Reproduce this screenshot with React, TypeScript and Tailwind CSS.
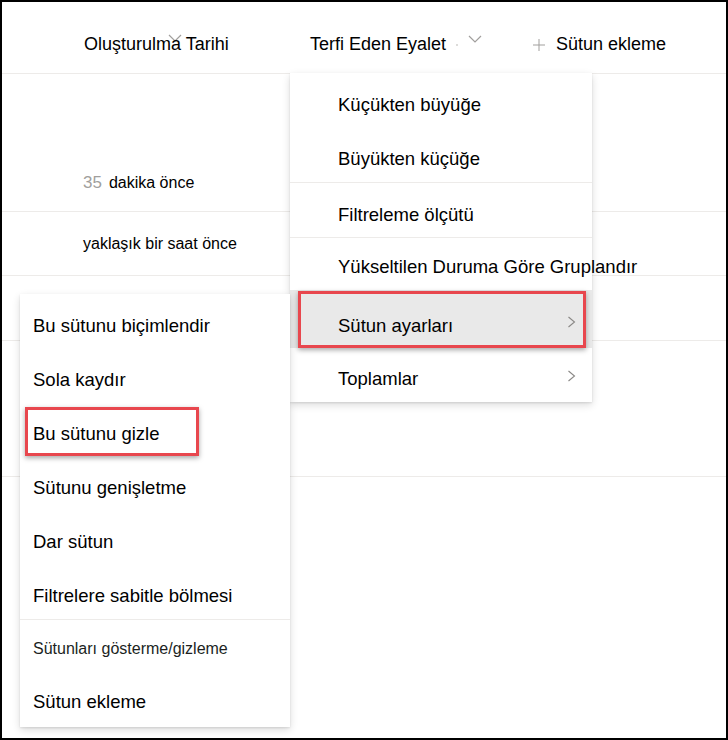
const SORT_ROWS = [
  { label: 'Küçükten büyüğe', row: 'h-[57px] pt-[20px]' },
  { label: 'Büyükten küçüğe', row: 'h-[52px] pt-[17px]' },
]

const SUB_ROWS = [
  { label: 'Bu sütunu biçimlendir', row: 'h-[54px]' },
  { label: 'Sola kaydır', row: 'h-[54px]' },
  { label: 'Bu sütunu gizle', row: 'h-[54px]', marked: true },
  { label: 'Sütunu genişletme', row: 'h-[54px]' },
  { label: 'Dar sütun', row: 'h-[54px]' },
  { label: 'Filtrelere sabitle bölmesi', row: 'h-[50px] items-start pt-[15px]' },
]

function ChevronDown({ className }: { className?: string }) {
  return (
    <svg width="14" height="8" viewBox="0 0 14 8" className={className} fill="none">
      <path d="M1 1l6 6 6-6" stroke="#a19f9d" strokeWidth="1.2" />
    </svg>
  )
}

function ChevronRight() {
  return (
    <svg width="9" height="12" viewBox="0 0 9 12" fill="none" className="shrink-0">
      <path d="M1.5 1l6 5-6 5" stroke="#8a8886" strokeWidth="1.1" />
    </svg>
  )
}

function RedBox({ className }: { className: string }) {
  return (
    <div
      className={`pointer-events-none absolute border-[3px] border-[#e8474e] shadow-[0_2px_5px_rgba(0,0,0,0.35)] ${className}`}
    />
  )
}

function Header() {
  return (
    <div className="flex h-[72px] items-center border-b border-[#edebe9] pl-[82px] pt-[14px] text-[18px] text-black">
      <div className="relative w-[226px] shrink-0">
        <ChevronDown className="absolute left-[84px] top-[3px]" />
        <span className="relative whitespace-nowrap">Oluşturulma Tarihi</span>
      </div>
      <div className="relative w-[223px] shrink-0">
        <span className="whitespace-nowrap">Terfi Eden Eyalet</span>
        <span className="absolute left-[146px] top-[13px] h-[2px] w-[2px] rounded-full bg-[#d2d0ce]" />
        <ChevronDown className="absolute left-[158px] top-[4px]" />
      </div>
      <div className="flex items-center gap-[11px]">
        <svg width="12" height="12" viewBox="0 0 12 12" fill="none">
          <path d="M6 0v12M0 6h12" stroke="#a19f9d" strokeWidth="1" />
        </svg>
        <span className="whitespace-nowrap">Sütun ekleme</span>
      </div>
    </div>
  )
}

function SortMenu() {
  return (
    <div className="absolute left-[288px] top-[71px] w-[302px] bg-white text-[18.5px] leading-6 text-black shadow-[0_3px_8px_rgba(0,0,0,0.14),0_1px_2px_rgba(0,0,0,0.1)]">
      {SORT_ROWS.map((r) => (
        <div key={r.label} className={`pl-12 ${r.row}`}>
          {r.label}
        </div>
      ))}
      <div className="h-px bg-[#edebe9]" />
      <div className="h-[54px] pl-12 pt-[20px]">Filtreleme ölçütü</div>
      <div className="h-px bg-[#edebe9]" />
      <div className="h-[52px] whitespace-nowrap pl-12 pt-[17px]">Yükseltilen Duruma Göre Gruplandır</div>
      <div className="relative flex h-[58px] items-start justify-between bg-[#e9e9e9] pl-12 pr-[16px] pt-[24px]">
        <span>Sütun ayarları</span>
        <span className="pt-[2px]">
          <ChevronRight />
        </span>
        <RedBox className="left-[8px] right-[6px] top-[1px] bottom-0" />
      </div>
      <div className="flex h-[54px] items-start justify-between pl-12 pr-[16px] pt-[19px]">
        <span>Toplamlar</span>
        <span className="pt-[3px]">
          <ChevronRight />
        </span>
      </div>
    </div>
  )
}

function ColumnSettingsMenu() {
  return (
    <div className="absolute left-[18px] top-[292px] w-[270px] bg-white pt-[5px] text-[18.5px] leading-6 text-black shadow-[0_3px_8px_rgba(0,0,0,0.14),0_1px_2px_rgba(0,0,0,0.1)]">
      {SUB_ROWS.map((r) => (
        <div key={r.label} className={`relative flex items-center pl-[13px] ${r.row}`}>
          <span className="whitespace-nowrap">{r.label}</span>
          {r.marked && <RedBox className="left-[5px] top-0 h-[49px] w-[174px]" />}
        </div>
      ))}
      <div className="h-px bg-[#edebe9]" />
      <div className="flex h-[56px] items-center pl-[13px] pt-[2px] text-[16px] text-[#201f1e]">
        Sütunları gösterme/gizleme
      </div>
      <div className="flex h-[51px] items-center pl-[13px]">Sütun ekleme</div>
    </div>
  )
}

export default function App() {
  return (
    <div className="relative h-[740px] w-[728px] overflow-hidden border-2 border-black bg-white font-['Liberation_Sans',Arial,sans-serif]">
      <Header />
      <div className="flex h-[138px] items-end border-b border-[#edebe9] pb-[16px] pl-[81px] text-[16px] text-black">
        <span className="mr-[7px] text-[17px] text-[#a19f9d]">35</span>
        <span>dakika önce</span>
      </div>
      <div className="flex h-[64px] items-center border-b border-[#edebe9] pl-[81px] text-[16px] text-black">
        yaklaşık bir saat önce
      </div>
      <div className="h-[65px] border-b border-[#edebe9]" />
      <div className="h-[136px] border-b border-[#edebe9]" />
      <SortMenu />
      <ColumnSettingsMenu />
    </div>
  )
}
